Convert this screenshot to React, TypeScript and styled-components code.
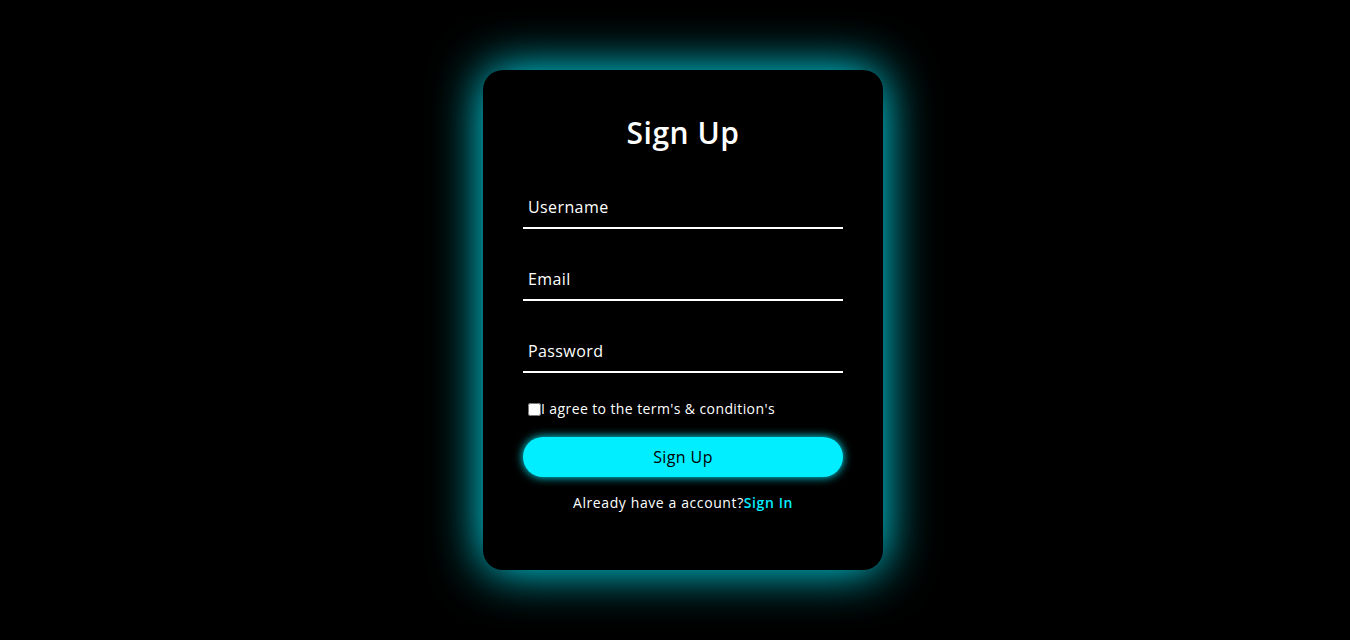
import React from 'react';
import styled, { createGlobalStyle } from 'styled-components';

const GlobalStyle = createGlobalStyle`
  * {
    box-sizing: border-box;
  }
  body {
    margin: 0;
    background: #000;
    font-family: 'Open Sans', 'Liberation Sans', sans-serif;
  }
`;

const StyledPage = styled.div`
  min-height: 100vh;
  padding-left: 16px;
  display: flex;
  justify-content: center;
  align-items: center;
`;

const Card = styled.form`
  width: 400px;
  height: 500px;
  background: #000;
  border-radius: 20px;
  box-shadow: 0 0 50px #0ef;
  padding: 40px;
  display: flex;
  flex-direction: column;

  h2 {
    margin: 0 0 32px;
    color: #fff;
    font-size: 30px;
    font-weight: 600;
    line-height: 45px;
    letter-spacing: 0.5px;
    text-align: center;
  }
`;

const Field = styled.input`
  width: 100%;
  height: 42px;
  margin-bottom: 30px;
  padding: 0 5px;
  background: transparent;
  border: none;
  border-bottom: 2px solid #fff;
  outline: none;
  color: #fff;
  font-family: inherit;
  font-size: 16px;
  letter-spacing: 0.4px;

  &::placeholder {
    color: #fff;
  }
`;

const Terms = styled.label`
  display: flex;
  align-items: center;
  margin: -4px 0 0 5px;
  color: #fff;
  font-size: 14px;
  line-height: 20px;
  letter-spacing: 0.4px;

  input {
    margin: 0;
    width: 13px;
    height: 13px;
  }
`;

const SubmitButton = styled.button`
  width: 100%;
  height: 40px;
  margin-top: 18px;
  border: none;
  border-radius: 40px;
  background: #0ef;
  box-shadow: 0 0 10px #0ef;
  color: #000;
  font-family: inherit;
  font-size: 16px;
  font-weight: 500;
  letter-spacing: 0.4px;
  cursor: pointer;
`;

const Footer = styled.p`
  margin: 16px 0 0;
  color: #fff;
  font-size: 14px;
  line-height: 20px;
  letter-spacing: 0.6px;
  text-align: center;

  a {
    color: #0ef;
    font-weight: 600;
    text-decoration: none;
  }
`;

const App = () => {
  return (
    <>
      <GlobalStyle />
      <StyledPage>
        <Card onSubmit={(e) => e.preventDefault()}>
          <h2>Sign Up</h2>
          <Field type="text" placeholder="Username" />
          <Field type="email" placeholder="Email" />
          <Field type="password" placeholder="Password" />
          <Terms>
            <input type="checkbox" />
            I agree to the term's &amp; condition's
          </Terms>
          <SubmitButton type="submit">Sign Up</SubmitButton>
          <Footer>
            Already have a account?<a href="#">Sign In</a>
          </Footer>
        </Card>
      </StyledPage>
    </>
  );
};

export default App;
